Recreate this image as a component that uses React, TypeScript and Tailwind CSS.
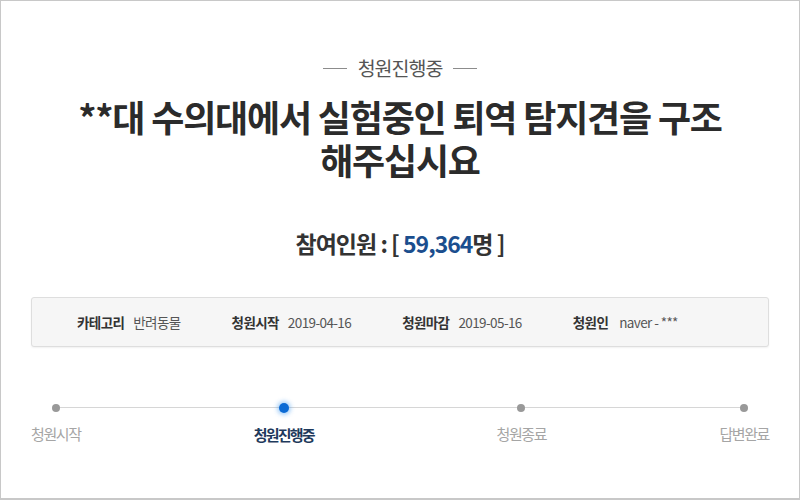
export default function App() {
  const steps = [
    { label: "청원시작", active: false, align: "items-start" },
    { label: "청원진행중", active: true, align: "items-center" },
    { label: "청원종료", active: false, align: "items-center" },
    { label: "답변완료", active: false, align: "items-end" },
  ];

  return (
    <div className="h-[500px] w-[800px] border border-b-2 border-[#c8c8c8] bg-white font-['Noto_Sans_CJK_KR','Noto_Sans',sans-serif]">
      {/* status badge */}
      <div className="flex items-center justify-center gap-[11px] pt-[54px]">
        <span className="h-px w-[24px] bg-[#8c8c8c]" />
        <span className="text-[19.5px] leading-[26px] tracking-[-1px] text-[#555]">청원진행중</span>
        <span className="h-px w-[24px] bg-[#8c8c8c]" />
      </div>

      <h1 className="mt-[14px] text-center text-[36px] font-bold leading-[43px] tracking-[-1.2px] text-[#2b2b2b]">
        **대 수의대에서 실험중인 퇴역 탐지견을 구조
        <br />
        해주십시요
      </h1>

      <p className="mt-[47px] text-center text-[23px] font-bold leading-[30px] tracking-[-1px] text-[#333]">
        참여인원 : [ <span className="text-[#1b4e8e]">59,364</span>명 ]
      </p>

      <div className="mx-[30px] mt-[39px] flex h-[50px] items-center gap-[51px] rounded-[3px] border border-[#dedede] bg-[#f6f6f6] pl-[45px] text-[13.5px] tracking-[-0.6px] shadow-[0_1px_2px_rgba(0,0,0,0.06)]">
        <div className="flex gap-[9px]">
          <span className="font-bold text-[#333]">카테고리</span>
          <span className="text-[#555]">반려동물</span>
        </div>
        <div className="flex gap-[9px]">
          <span className="font-bold text-[#333]">청원시작</span>
          <span className="text-[#555]">2019-04-16</span>
        </div>
        <div className="flex gap-[9px]">
          <span className="font-bold text-[#333]">청원마감</span>
          <span className="text-[#555]">2019-05-16</span>
        </div>
        <div className="flex gap-[11px]">
          <span className="font-bold text-[#333]">청원인</span>
          <span className="text-[#555]">naver - ***</span>
        </div>
      </div>

      {/* progress */}
      <div className="relative mx-[30px] mt-[55px] flex justify-between">
        <div className="absolute left-[23px] right-[24px] top-[5px] h-px bg-[#d6d6d6]" />
        {steps.map((s, i) => (
          <div key={s.label} className={`relative flex flex-col ${s.align} ${i === 1 ? "mr-[10px]" : ""}`}>
            <div className="flex w-[50px] justify-center">
              {s.active ? (
                <span className="mt-[1px] h-[10px] w-[10px] rounded-full bg-[#0b6ad4] shadow-[0_0_4px_2px_rgba(60,150,240,0.45)]" />
              ) : (
                <span className="mt-[2px] h-[8px] w-[8px] rounded-full bg-[#999]" />
              )}
            </div>
            <span
              className={
                s.active
                  ? "mt-[11px] text-[15px] font-bold tracking-[-1.8px] text-[#1f3a5c]"
                  : "mt-[11px] text-[15px] tracking-[-1.4px] text-[#a5a5a5]"
              }
            >
              {s.label}
            </span>
          </div>
        ))}
      </div>
    </div>
  );
}
